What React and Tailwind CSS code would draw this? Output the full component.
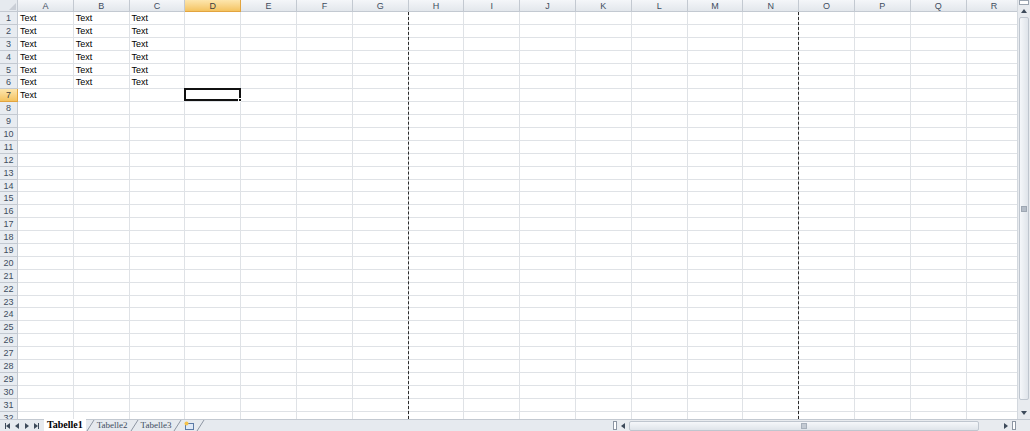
import React from 'react';

const cols = ['A', 'B', 'C', 'D', 'E', 'F', 'G', 'H', 'I', 'J', 'K', 'L', 'M', 'N', 'O', 'P', 'Q', 'R'];
const rows = Array.from({ length: 32 }, (_, i) => i + 1);

function cellText(r, c) {
  if (r <= 6 && c <= 2) return 'Text';
  if (r === 7 && c === 0) return 'Text';
  return '';
}

function Tri({ dir, className = '' }) {
  const pts = {
    up: '0,4 3,0 6,4',
    down: '0,0 6,0 3,4',
    left: '4,0 4,6 0,3',
    right: '0,0 0,6 4,3',
  }[dir];
  const size = dir === 'up' || dir === 'down' ? { w: 6, h: 4 } : { w: 4, h: 6 };
  return (
    <svg width={size.w} height={size.h} viewBox={`0 0 ${size.w} ${size.h}`} className={className}>
      <polygon points={pts} fill="#3d4a5a" />
    </svg>
  );
}

function Slash() {
  return (
    <svg width="9" height="12" viewBox="0 0 9 12" className="shrink-0">
      <line x1="1" y1="12" x2="8" y2="1" stroke="#8d96a3" strokeWidth="1" />
    </svg>
  );
}

function VScroll() {
  return (
    <div className="w-[13px] shrink-0 flex flex-col bg-[#e8ebef] border-l border-[#d3d8de]">
      <div className="h-[5px] mx-[1px] border border-[#9aa4b0] bg-white" />
      <div className="h-[12px] flex items-center justify-center">
        <Tri dir="up" />
      </div>
      <div className="flex-1 mx-[1px] mb-[7px] rounded-[2px] border border-[#bfc6cf] bg-gradient-to-r from-[#f5f7fa] to-[#dfe4ea] flex items-center justify-center">
        <div className="w-[6px] h-[6px] bg-[#b4bcc7] border border-[#9ea7b3]" />
      </div>
      <div className="h-[12px] flex items-center justify-center">
        <Tri dir="down" />
      </div>
    </div>
  );
}

function HScroll() {
  return (
    <div className="w-[405px] shrink-0 flex items-center bg-[#e8ebef]">
      <div className="w-[4px] h-[9px] ml-[1px] border border-[#8d96a3] bg-white" />
      <div className="w-[12px] flex items-center justify-center">
        <Tri dir="left" />
      </div>
      <div className="w-[350px] h-[10px] rounded-[2px] border border-[#bfc6cf] bg-gradient-to-b from-[#f5f7fa] to-[#dfe4ea] flex items-center justify-center">
        <div className="w-[6px] h-[6px] bg-[#c3cad3] border border-[#a7b0bb]" />
      </div>
      <div className="flex-1" />
      <div className="w-[12px] flex items-center justify-center">
        <Tri dir="right" />
      </div>
      <div className="w-[4px] h-[9px] mr-[1px] border border-[#8d96a3] bg-white" />
    </div>
  );
}

export default function App() {
  return (
    <div className="w-[1030px] h-[431px] overflow-hidden bg-white flex flex-col font-['Liberation_Sans',Arial,sans-serif] text-[9px] text-black">
      <div className="flex flex-1 min-h-0">
        <div className="relative flex-1 overflow-hidden">
          <div className="flex h-[12px]">
            <div className="w-[18px] shrink-0 border-r border-b border-[#c3c9d1] bg-[#e6eaef] flex items-end justify-end p-[1px]">
              <svg width="7" height="7" viewBox="0 0 7 7">
                <polygon points="7,0 7,7 0,7" fill="#c9ced6" />
              </svg>
            </div>
            {cols.map((c) => (
              <div
                key={c}
                className={`w-[55.8px] shrink-0 border-r border-b text-center leading-[12px] ${
                  c === 'D'
                    ? 'bg-gradient-to-b from-[#fde6ad] to-[#f4c35f] border-[#e2a43f] text-[#3c3c3c]'
                    : 'bg-gradient-to-b from-[#f4f6f9] to-[#e3e7ec] border-[#c3c9d1] text-[#3e4d60]'
                }`}
              >
                {c}
              </div>
            ))}
          </div>
          {rows.map((r) => (
            <div key={r} className="flex h-[12.9px]">
              <div
                className={`w-[18px] shrink-0 border-r border-b text-center leading-[13px] ${
                  r === 7
                    ? 'bg-gradient-to-b from-[#fde6ad] to-[#f4c35f] border-[#e2a43f] text-[#3c3c3c]'
                    : 'bg-[#e8ecf1] border-[#c3c9d1] text-[#3e4d60]'
                }`}
              >
                {r}
              </div>
              {cols.map((c, ci) => (
                <div
                  key={c}
                  className="relative w-[55.8px] shrink-0 border-r border-b border-[#dfe2e6] px-[2px] leading-[13px] whitespace-nowrap"
                >
                  {cellText(r, ci)}
                  {r === 7 && c === 'D' && (
                    <div className="absolute -left-[1px] -top-[1px] -right-[1px] bottom-0 border-2 border-[#111]">
                      <div className="absolute -right-[3px] -bottom-[3px] w-[4px] h-[4px] bg-[#111] border border-white" />
                    </div>
                  )}
                </div>
              ))}
            </div>
          ))}
          <div className="absolute top-[12px] bottom-0 left-[407.6px] border-l border-dashed border-[#2a2a2a]" />
          <div className="absolute top-[12px] bottom-0 left-[798.2px] border-l border-dashed border-[#2a2a2a]" />
        </div>
        <VScroll />
      </div>
      <div className="h-[12px] shrink-0 flex bg-[#e6eaef] border-t border-[#c3c9d1]">
        <div className="w-[44px] shrink-0 flex items-center justify-around px-[2px]">
          <div className="flex items-center">
            <div className="w-[1px] h-[6px] bg-[#3d4a5a]" />
            <Tri dir="left" />
          </div>
          <Tri dir="left" />
          <Tri dir="right" />
          <div className="flex items-center">
            <Tri dir="right" />
            <div className="w-[1px] h-[6px] bg-[#3d4a5a]" />
          </div>
        </div>
        <div className="flex items-stretch -mt-px font-['Liberation_Serif','Times_New_Roman',serif] text-[#3e4d60]">
          <div className="bg-white px-[3px] font-bold text-[10px] leading-[12px] text-black">Tabelle1</div>
          <Slash />
          <div className="px-[2px] text-[9px] leading-[12px]">Tabelle2</div>
          <Slash />
          <div className="px-[2px] text-[9px] leading-[12px]">Tabelle3</div>
          <Slash />
          <div className="px-[2px] flex items-center">
            <svg width="10" height="9" viewBox="0 0 10 9">
              <rect x="1.5" y="2.5" width="8" height="6" fill="#dfe9f7" stroke="#5b7aa6" />
              <circle cx="2.5" cy="2.5" r="2" fill="#f5c24a" />
            </svg>
          </div>
          <Slash />
        </div>
        <div className="flex-1" />
        <HScroll />
        <div className="w-[13px] shrink-0 bg-[#e8ebef]" />
      </div>
    </div>
  );
}
